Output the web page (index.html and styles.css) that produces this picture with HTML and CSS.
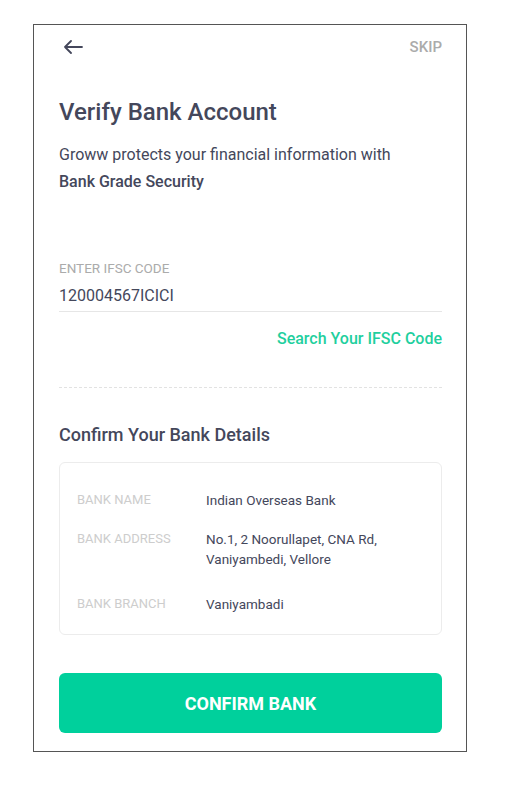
FILE: index.html
```html
<!DOCTYPE html>
<html lang="en">
<head>
<meta charset="utf-8">
<title>Verify Bank Account</title>
<link rel="stylesheet" href="styles.css">
</head>
<body>
<div class="phone">
  <div class="topbar">
    <svg class="back" width="20" height="14" viewBox="0 0 20 14" aria-label="Back">
      <path d="M19 7H2M8 1L2 7l6 6" fill="none" stroke="#44475b" stroke-width="1.8" stroke-linecap="round" stroke-linejoin="round"/>
    </svg>
    <span class="skip">SKIP</span>
  </div>

  <h1 class="title">Verify Bank Account</h1>
  <p class="subtitle">Groww protects your financial information with<br><strong>Bank Grade Security</strong></p>

  <div class="field">
    <div class="field-label">ENTER IFSC CODE</div>
    <div class="field-value">120004567ICICI</div>
  </div>
  <div class="search-row"><a class="search-link">Search Your IFSC Code</a></div>

  <div class="dashed"></div>

  <h2 class="section-title">Confirm Your Bank Details</h2>
  <div class="card">
    <div class="row">
      <div class="k">BANK NAME</div>
      <div class="v">Indian Overseas Bank</div>
    </div>
    <div class="row row-tall">
      <div class="k">BANK ADDRESS</div>
      <div class="v">No.1, 2 Noorullapet, CNA Rd,<br>Vaniyambedi, Vellore</div>
    </div>
    <div class="row">
      <div class="k">BANK BRANCH</div>
      <div class="v">Vaniyambadi</div>
    </div>
  </div>

  <button class="confirm">CONFIRM BANK</button>
</div>
</body>
</html>
```

FILE: styles.css
```css
* { box-sizing: border-box; }
html, body { margin: 0; padding: 0; background: #fff; }
body { font-family: Roboto, "Noto Sans", sans-serif; color: #44475b; }

.phone {
  margin: 24px 0 0 33px;
  width: 434px;
  height: 728px;
  border: 1px solid #555;
  padding: 0 24px 0 25px;
  display: flex;
  flex-direction: column;
}

.topbar {
  display: flex;
  justify-content: space-between;
  align-items: center;
  height: 20px;
  margin-top: 12px;
  padding-left: 4px;
}
.back { display: block; }
.skip { font-size: 15px; font-weight: 500; color: #ababab; }

.title {
  margin: 40px 0 0;
  font-size: 24px;
  line-height: 30px;
  font-weight: 500;
  color: #44475b;
}
.subtitle {
  margin: 14px 0 0;
  font-size: 16px;
  line-height: 27px;
  color: #44475b;
}
.subtitle strong { font-weight: 500; }

.field { margin-top: 65px; border-bottom: 1px solid #e6e6e6; padding-bottom: 5px; }
.field-label { font-size: 13.5px; line-height: 16px; color: #ababab; }
.field-value { font-size: 16px; line-height: 20px; margin-top: 10px; color: #44475b; }

.search-row { display: flex; justify-content: flex-end; margin-top: 17px; }
.search-link { font-size: 16px; line-height: 20px; font-weight: 500; color: #1fcf9e; }

.dashed { margin-top: 38px; border-top: 1px dashed #e2e2e2; }

.section-title {
  margin: 36px 0 0;
  font-size: 18px;
  line-height: 22px;
  font-weight: 500;
  color: #44475b;
}

.card {
  margin-top: 16px;
  border: 1px solid #ececec;
  border-radius: 6px;
  padding: 27px 17px 20px;
  display: flex;
  flex-direction: column;
  gap: 19px;
}
.row { display: flex; }
.row-tall { margin-bottom: 6px; }
.k { width: 129px; font-size: 13px; line-height: 20px; color: #cdcdcd; }
.v { font-size: 13.5px; line-height: 20px; color: #44475b; }

.confirm {
  margin-top: 38px;
  height: 60px;
  border: 0;
  border-radius: 6px;
  background: #00d09c;
  color: #fff;
  font-family: Roboto, sans-serif;
  font-size: 18px;
  font-weight: 700;
  width: 100%;
}
```
